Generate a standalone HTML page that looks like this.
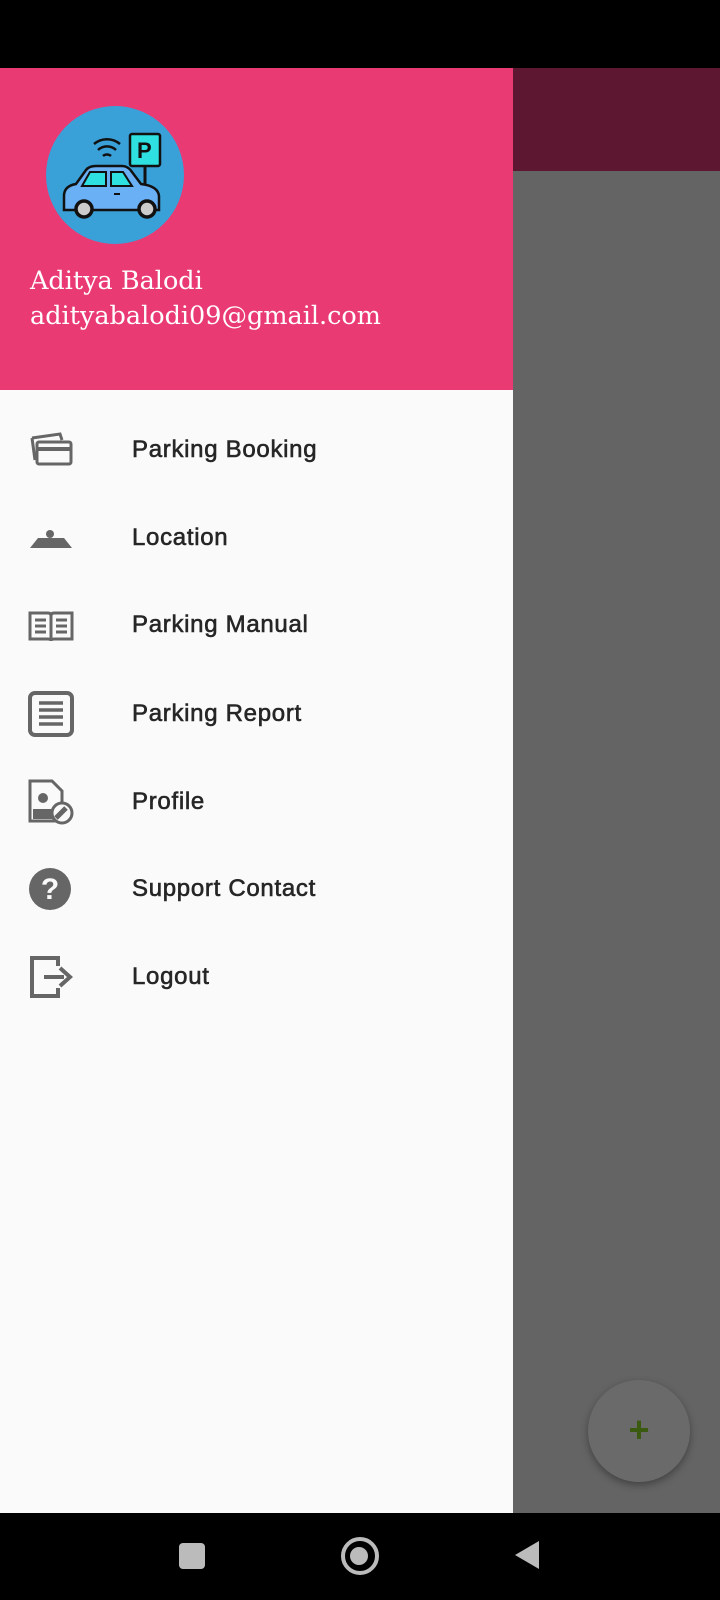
<!DOCTYPE html>
<html><head><meta charset="utf-8"><style>
body{margin:0;width:720px;height:1600px;position:relative;overflow:hidden;background:#666;font-family:"Liberation Sans",sans-serif}
.abs{position:absolute}
.item{position:absolute;left:0;width:513px;height:88px}
.item span{position:absolute;left:132px;top:50%;transform:translateY(-50%);font-size:24px;color:#262626;font-weight:normal;-webkit-text-stroke:0.6px #262626;letter-spacing:0.7px}
.item svg{position:absolute;left:28px;top:50%;transform:translateY(-50%)}
</style></head><body>
<div class="abs" style="left:0;top:0;width:720px;height:68px;background:#000"></div>
<div class="abs" style="left:513px;top:68px;width:207px;height:103px;background:#5e1730"></div>
<div class="abs" style="left:513px;top:171px;width:207px;height:1342px;background:#646464"></div>
<div class="abs" style="left:588px;top:1380px;width:102px;height:102px;border-radius:50%;background:#6a6a6a;box-shadow:0 3px 8px rgba(0,0,0,.35)"></div>
<div class="abs" style="left:627px;top:1418px;width:24px;height:24px;color:#3a5a10;font-size:36px;font-weight:bold;line-height:24px;text-align:center">+</div>
<div class="abs" style="left:0;top:68px;width:513px;height:1445px;background:#fafafa"></div>
<div class="abs" style="left:0;top:68px;width:513px;height:322px;background:#ea3a74"></div>
<svg class="abs" style="left:44px;top:104px" width="142" height="142" viewBox="0 0 142 142">
<circle cx="71" cy="71" r="69" fill="#3aa0d8"/>
<path d="M50 40a20 20 0 0 1 26 0M54 46a13 13 0 0 1 18 0M59 52a6 6 0 0 1 8 0" stroke="#111" stroke-width="2.5" fill="none"/>
<rect x="86" y="30" width="30" height="32" rx="2" fill="#2fe0e0" stroke="#111" stroke-width="2.5"/>
<text x="93" y="54" font-size="22" font-weight="bold" font-family="Liberation Sans" fill="#111">P</text>
<path d="M101 62v26" stroke="#111" stroke-width="3"/>
<path d="M20 106v-14q0-10 12-12l10-14q3-4 10-4h26q6 0 10 6l9 12q17 2 18 12v14z" fill="#6ab0f5" stroke="#111" stroke-width="2.5"/>
<path d="M46 68h16v14h-24zM67 68h12l9 14h-21z" fill="#2fe0e0" stroke="#111" stroke-width="2"/>
<path d="M70 90h6" stroke="#111" stroke-width="2"/>
<circle cx="40" cy="105" r="8" fill="#ccc" stroke="#111" stroke-width="3.5"/>
<circle cx="103" cy="105" r="8" fill="#ccc" stroke="#111" stroke-width="3.5"/>
</svg>
<div class="abs" style="left:30px;top:264px;color:#fff;font-family:'DejaVu Serif','Liberation Serif',serif;font-size:25.5px;line-height:35px">Aditya Balodi<br>adityabalodi09@gmail.com</div>

<div class="item" style="top:406px"><svg width="46" height="40" viewBox="0 0 46 40"><path d="M4 8l28-4 2 6" fill="none" stroke="#666" stroke-width="3"/><path d="M4 8l3 22" stroke="#666" stroke-width="3"/><rect x="9" y="12" width="34" height="22" rx="2" fill="none" stroke="#666" stroke-width="3"/><path d="M9 19h34" stroke="#666" stroke-width="4"/></svg><span>Parking Booking</span></div>
<div class="item" style="top:494px"><svg width="46" height="40" viewBox="0 0 46 40"><circle cx="22" cy="16" r="4" fill="#666"/><path d="M2 30l8-10h26l8 10z" fill="#666"/></svg><span>Location</span></div>
<div class="item" style="top:581px"><svg width="46" height="40" viewBox="0 0 46 40"><path d="M2 8h18q3 0 3 3 0-3 3-3h18v26H26q-3 0-3 2 0-2-3-2H2z" fill="none" stroke="#666" stroke-width="3"/><path d="M23 11v24M7 15h11M7 21h11M7 27h11M28 15h11M28 21h11M28 27h11" stroke="#666" stroke-width="3"/></svg><span>Parking Manual</span></div>
<div class="item" style="top:670px"><svg width="46" height="46" viewBox="0 0 46 46"><rect x="2" y="2" width="42" height="42" rx="5" fill="none" stroke="#666" stroke-width="4"/><path d="M11 12h24M11 19h24M11 26h24M11 33h24" stroke="#666" stroke-width="3.5"/></svg><span>Parking Report</span></div>
<div class="item" style="top:758px"><svg width="46" height="46" viewBox="0 0 46 46"><path d="M2 2h22l10 10v30H2z" fill="none" stroke="#666" stroke-width="3"/><circle cx="15" cy="19" r="5" fill="#666"/><path d="M5 40v-10h20v10z" fill="#666"/><circle cx="34" cy="34" r="10" fill="#fafafa" stroke="#666" stroke-width="3"/><path d="M28 39l10-10" stroke="#666" stroke-width="5"/></svg><span>Profile</span></div>
<div class="item" style="top:845px"><svg width="46" height="46" viewBox="0 0 46 46"><circle cx="22" cy="23" r="21" fill="#666"/><text x="22" y="33" text-anchor="middle" font-size="30" font-weight="bold" font-family="Liberation Sans" fill="#fafafa">?</text></svg><span>Support Contact</span></div>
<div class="item" style="top:933px"><svg width="46" height="46" viewBox="0 0 46 46"><path d="M30 12V4H4v38h26v-8" fill="none" stroke="#666" stroke-width="4"/><path d="M16 23h20" stroke="#666" stroke-width="4"/><path d="M32 14l10 9-10 9" fill="none" stroke="#666" stroke-width="4"/></svg><span>Logout</span></div>

<div class="abs" style="left:0;top:1513px;width:720px;height:87px;background:#000"></div>
<div class="abs" style="left:179px;top:1543px;width:26px;height:26px;border-radius:4px;background:#bbb"></div>
<div class="abs" style="left:341px;top:1537px;width:30px;height:30px;border-radius:50%;border:4px solid #bbb"></div>
<div class="abs" style="left:350px;top:1547px;width:18px;height:18px;border-radius:50%;background:#bbb"></div>
<svg class="abs" style="left:513px;top:1539px" width="28" height="32"><path d="M26 2v28L2 16z" fill="#bbb"/></svg>
</body></html>
